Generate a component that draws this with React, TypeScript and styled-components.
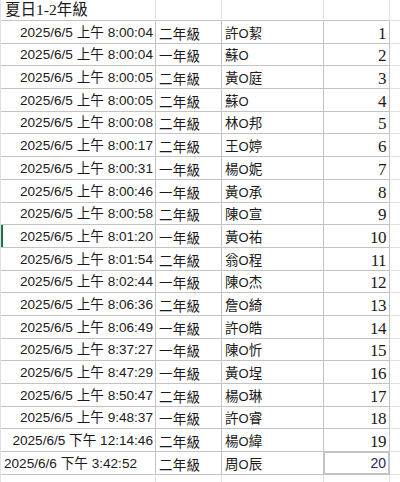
import React from "react";
import styled, { createGlobalStyle } from "styled-components";

const Global = createGlobalStyle`
  html, body { margin: 0; padding: 0; background: #ffffff; overflow: hidden; }
  #root { width: 400px; height: 482px; overflow: hidden; }
`;

const GRID = "#e1e1e1";
const EDGE = "#c3c3c3";

const Sheet = styled.div`
  display: grid;
  grid-template-columns: 155px 66px 102px 66px 11px;
  grid-template-rows: 21px repeat(21, 22.7px);
  border-left: 1px solid ${GRID};
  width: 399px;
  color: #1a1a1a;
`;

type CellProps = {
  $align?: "left" | "right";
  $edge?: boolean;
  $bottomEdge?: boolean;
  $marked?: boolean;
  $boxed?: boolean;
};

const Cell = styled.div<CellProps>`
  box-sizing: border-box;
  display: flex;
  align-items: flex-end;
  justify-content: ${(p) => (p.$align === "right" ? "flex-end" : "flex-start")};
  padding: 0 3px 3px 3px;
  border-right: 1px solid ${(p) => (p.$edge ? EDGE : GRID)};
  border-bottom: 1px solid ${(p) => (p.$edge || p.$bottomEdge ? EDGE : GRID)};
  white-space: nowrap;
  overflow: visible;
  min-width: 0;
  box-shadow: ${(p) =>
    p.$marked ? "inset 2px 0 0 #1e7145" : p.$boxed ? `inset 0 0 0 1px ${EDGE}` : "none"};
`;

const TitleText = styled.span`
  font-family: "Liberation Serif", "Noto Sans CJK TC", serif;
  font-size: 15.5px;
  line-height: 16px;
  position: relative;
  top: 1px;
  z-index: 1;
  padding-left: 1px;
`;

const DateText = styled.span`
  font-family: "Liberation Sans", "Noto Sans CJK TC", sans-serif;
  font-size: 13.6px;
  line-height: 15px;
  margin-right: -1px;
`;

const CjkText = styled.span`
  font-family: "Noto Sans CJK TC", sans-serif;
  font-size: 13.5px;
  line-height: 15px;
  letter-spacing: 0.3px;
  position: relative;
  top: 1px;
`;

const NameText = styled.span`
  font-family: "Noto Sans CJK TC", sans-serif;
  font-size: 13.5px;
  line-height: 15px;
  position: relative;
  top: 1px;
  & b {
    font-weight: normal;
    font-family: "Liberation Sans", sans-serif;
    font-size: 13px;
  }
`;

const NumText = styled.span<{ $sans?: boolean }>`
  font-family: ${(p) =>
    p.$sans ? `"Liberation Sans", sans-serif` : `"Liberation Serif", serif`};
  font-size: ${(p) => (p.$sans ? "14px" : "17px")};
  color: ${(p) => (p.$sans ? "#1c2a55" : "#1a1a1a")};
  line-height: 15px;
  letter-spacing: ${(p) => (p.$sans ? "0" : "-0.5px")};
  position: relative;
  top: ${(p) => (p.$sans ? "0" : "1px")};
`;

type Row = { date: string; grade: string; name: string; left?: boolean };

const rows: Row[] = [
  { date: "2025/6/5 上午 8:00:04", grade: "二年級", name: "許O絜" },
  { date: "2025/6/5 上午 8:00:04", grade: "一年級", name: "蘇O" },
  { date: "2025/6/5 上午 8:00:05", grade: "二年級", name: "黃O庭" },
  { date: "2025/6/5 上午 8:00:05", grade: "二年級", name: "蘇O" },
  { date: "2025/6/5 上午 8:00:08", grade: "二年級", name: "林O邦" },
  { date: "2025/6/5 上午 8:00:17", grade: "二年級", name: "王O婷" },
  { date: "2025/6/5 上午 8:00:31", grade: "一年級", name: "楊O妮" },
  { date: "2025/6/5 上午 8:00:46", grade: "一年級", name: "黃O承" },
  { date: "2025/6/5 上午 8:00:58", grade: "二年級", name: "陳O宣" },
  { date: "2025/6/5 上午 8:01:20", grade: "一年級", name: "黃O祐" },
  { date: "2025/6/5 上午 8:01:54", grade: "二年級", name: "翁O程" },
  { date: "2025/6/5 上午 8:02:44", grade: "一年級", name: "陳O杰" },
  { date: "2025/6/5 上午 8:06:36", grade: "二年級", name: "詹O綺" },
  { date: "2025/6/5 上午 8:06:49", grade: "一年級", name: "許O皓" },
  { date: "2025/6/5 上午 8:37:27", grade: "一年級", name: "陳O忻" },
  { date: "2025/6/5 上午 8:47:29", grade: "一年級", name: "黃O埕" },
  { date: "2025/6/5 上午 8:50:47", grade: "二年級", name: "楊O琳" },
  { date: "2025/6/5 上午 9:48:37", grade: "一年級", name: "許O睿" },
  { date: "2025/6/5 下午 12:14:46", grade: "二年級", name: "楊O緯" },
  { date: "2025/6/6 下午 3:42:52", grade: "二年級", name: "周O辰", left: true },
];

function Name({ text }: { text: string }) {
  const [first, ...rest] = text.split("O");
  return (
    <NameText>
      {first}
      <b>O</b>
      {rest.join("O")}
    </NameText>
  );
}

export default function App() {
  return (
    <>
      <Global />
      <Sheet>
        <Cell $bottomEdge>
          <TitleText>夏日1-2年級</TitleText>
        </Cell>
        <Cell $bottomEdge />
        <Cell $bottomEdge />
        <Cell $bottomEdge />
        <Cell />
        {rows.map((r, i) => {
          const last = i === rows.length - 1;
          return (
            <React.Fragment key={i}>
              <Cell $edge $align={r.left ? "left" : "right"} $marked={i === 9}>
                <DateText>{r.date}</DateText>
              </Cell>
              <Cell $edge>
                <CjkText>{r.grade}</CjkText>
              </Cell>
              <Cell $edge>
                <Name text={r.name} />
              </Cell>
              <Cell $edge $align="right" $boxed={last}>
                <NumText $sans={last}>{i + 1}</NumText>
              </Cell>
              <Cell />
            </React.Fragment>
          );
        })}
        <Cell />
        <Cell />
        <Cell />
        <Cell />
        <Cell />
      </Sheet>
    </>
  );
}
